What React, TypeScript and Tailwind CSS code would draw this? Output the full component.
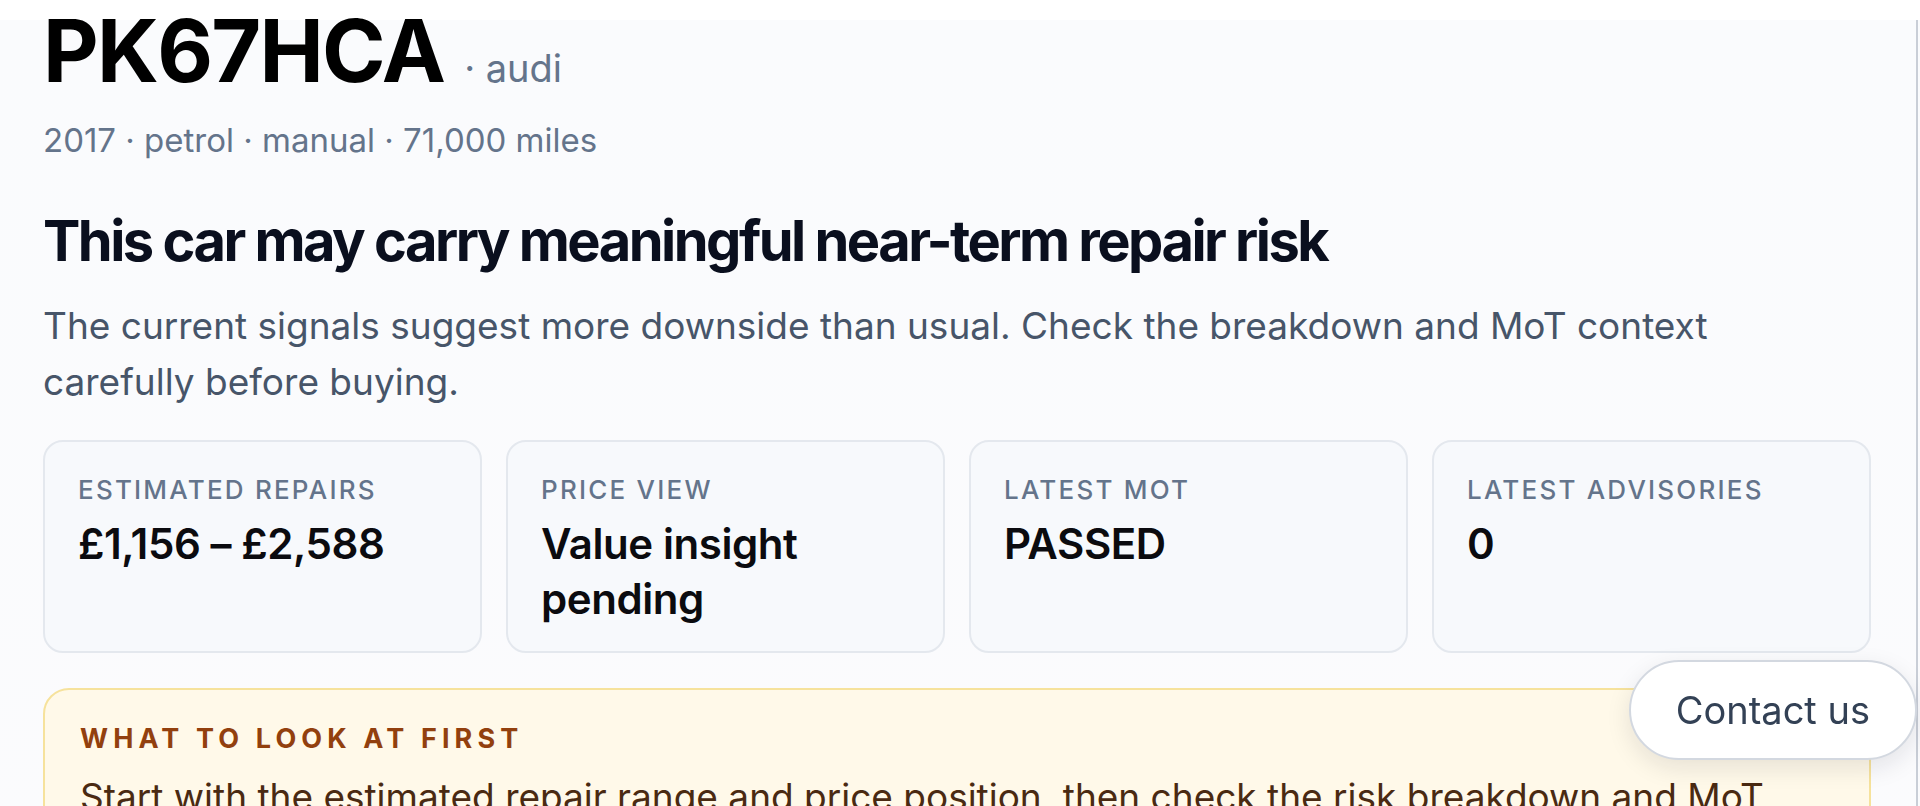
import React from "react";

const stats = [
  { label: "Estimated repairs", value: "£1,156 – £2,588" },
  { label: "Price view", value: "Value insight pending" },
  { label: "Latest MoT", value: "PASSED" },
  { label: "Latest advisories", value: "0" },
];

function StatCard({ label, value }: { label: string; value: string }) {
  return (
    <div className="rounded-[20px] border-2 border-[#e4e8ee] bg-[#f7f9fc] pl-[33px] pr-[30px] pt-[32px] pb-[25px]">
      <div className="text-[26px] leading-[32px] uppercase tracking-[0.085em] text-[#64748b] font-medium">
        {label}
      </div>
      <div className="mt-[10px] text-[42px] leading-[55px] font-semibold text-[#0b0b0f] tracking-[-0.01em]">
        {value}
      </div>
    </div>
  );
}

export default function App() {
  return (
    <div className="relative min-h-screen overflow-hidden font-[Inter,sans-serif] bg-[linear-gradient(to_bottom,#ffffff_0px,#ffffff_20px,#fafbfd_20px,#fbfbfd_100%)]">
      {/* right frame edge */}
      <div className="absolute right-[2px] top-[20px] bottom-0 w-[2px] bg-[#c9ced7]"></div>

      <main className="pl-[43px] pr-[49px] pt-[8px]">
        <div className="flex items-baseline gap-[20px]">
          <h1 className="text-[86px] leading-none font-bold tracking-[-0.02em] text-black">PK67HCA</h1>
          <span className="text-[38px] leading-none text-[#64748b]">· audi</span>
        </div>

        <p className="mt-[26px] text-[33px] leading-[40px] text-[#64748b]">
          2017 · petrol · manual · 71,000 miles
        </p>

        <h2 className="mt-[49px] text-[56px] leading-[64px] font-bold tracking-[-0.045em] text-[#0a0f1e]">
          This car may carry meaningful near-term repair risk
        </h2>

        <p className="mt-[25px] max-w-[1760px] text-[37px] leading-[56px] text-[#475569]">
          The current signals suggest more downside than usual. Check the breakdown and MoT context carefully before buying.
        </p>

        <div className="mt-[30px] grid grid-cols-4 gap-[24px]">
          {stats.map((s) => (
            <StatCard key={s.label} label={s.label} value={s.value} />
          ))}
        </div>

        <div className="mt-[35px] rounded-[26px] border-2 border-[#f6e29c] bg-[#fff9e9] pl-[35px] pr-[35px] pt-[32px] pb-[30px]">
          <div className="text-[27px] leading-[34px] font-bold uppercase tracking-[0.19em] text-[#92400e]">
            What to look at first
          </div>
          <p className="mt-[13px] text-[37px] leading-[56px] text-[#4a2a12]">
            Start with the estimated repair range and price position, then check the risk breakdown and MoT history before you commit.
          </p>
        </div>
      </main>

      <button className="fixed bottom-[46px] right-[3px] h-[100px] rounded-full border-2 border-[#d3d8e0] bg-white px-[45px] text-[38px] text-[#334155] shadow-[0_8px_24px_rgba(15,23,42,0.10)]">
        Contact us
      </button>
    </div>
  );
}
